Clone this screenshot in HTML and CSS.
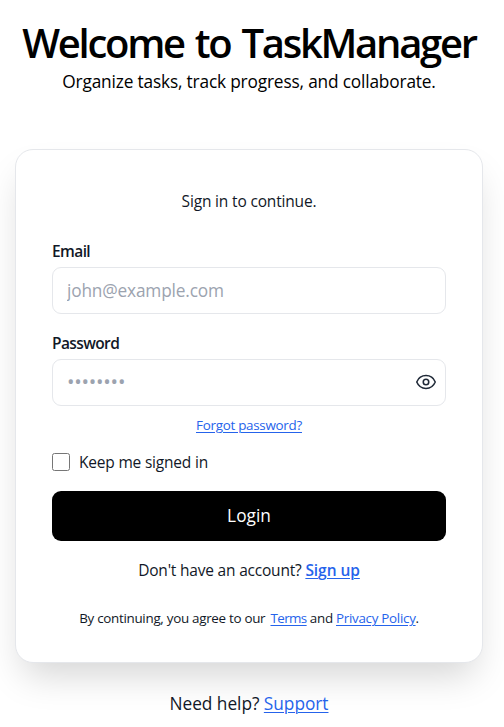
FILE: index.html
```html
<!DOCTYPE html>
<html lang="en">
<head>
<meta charset="utf-8">
<title>TaskManager</title>
<link rel="stylesheet" href="styles.css">
</head>
<body>
<main class="page">
  <header class="hero">
    <h1 class="title">Welcome to TaskManager</h1>
    <p class="subtitle">Organize tasks, track progress, and collaborate.</p>
  </header>
  <form class="card">
    <p class="intro">Sign in to continue.</p>
    <label class="label" for="email">Email</label>
    <input class="input" id="email" type="email" placeholder="john@example.com">
    <label class="label" for="password">Password</label>
    <div class="field">
      <input class="input input-password" id="password" type="password" placeholder="••••••••">
      <button class="reveal" type="button" aria-label="Show password">
        <svg class="eye" viewBox="0 0 24 24"><path d="M2.06 12.35a1 1 0 0 1 0-.7 10.75 10.75 0 0 1 19.88 0 1 1 0 0 1 0 .7 10.75 10.75 0 0 1-19.88 0"/><circle cx="12" cy="12" r="3"/></svg>
      </button>
    </div>
    <p class="forgot"><a href="#">Forgot password?</a></p>
    <label class="remember"><input class="checkbox" type="checkbox"><span>Keep me signed in</span></label>
    <button class="login" type="button">Login</button>
    <p class="signup">Don't have an account? <a class="strong" href="#">Sign up</a></p>
    <p class="terms">By continuing, you agree to our <a href="#">Terms</a> and <a href="#">Privacy Policy</a>.</p>
  </form>
  <footer class="help">Need help? <a href="#">Support</a></footer>
</main>
</body>
</html>
```
FILE: styles.css
```css
* { box-sizing: border-box; }
body { margin: 0; background: #fff; color: #111827; font-family: "Open Sans", "Noto Sans", sans-serif; font-size: 15.5px; letter-spacing: -.17px; overflow: hidden; }
h1, p { margin: 0; }
a { color: #2563eb; text-decoration: underline; text-decoration-thickness: 1px; text-underline-offset: 2px; }
.page { padding: 19px 21px 0 15px; text-align: center; }
.hero { color: #000; }
.title { font-size: 40px; font-weight: 600; line-height: 48px; letter-spacing: -2.3px; word-spacing: 3px; white-space: nowrap; }
.subtitle { margin-top: 1px; font-size: 17.3px; line-height: 28px; }
.card { display: flex; flex-direction: column; margin-top: 53px; height: 514px; padding: 39px 36px 0; border: 1px solid #e5e7eb; border-radius: 18px; background: #fff; box-shadow: 0 20px 36px -8px rgba(0, 0, 0, .17); }
.intro { line-height: 24px; }
.label { margin-top: 26px; line-height: 24px; text-align: left; font-weight: 600; letter-spacing: -.6px; }
.input { width: 100%; height: 47px; margin-top: 4px; padding: 0 14px; border: 1px solid #e5e7eb; border-radius: 9px; background: #fff; font: inherit; font-size: 17.3px; letter-spacing: -.18px; }
.input::placeholder { color: #9ca3af; opacity: 1; }
.input-password::placeholder { font-size: 20px; letter-spacing: -.25px; }
.label ~ .label { margin-top: 17px; }
.field { position: relative; }
.reveal { position: absolute; right: 9px; top: 16px; width: 22px; height: 22px; padding: 0; border: 0; background: none; }
.eye { display: block; width: 22px; height: 22px; fill: none; stroke: #1f2937; stroke-width: 1.7; stroke-linecap: round; stroke-linejoin: round; }
.forgot { margin-top: 9px; font-size: 13.4px; line-height: 21px; letter-spacing: -.27px; }
.remember { display: flex; align-items: center; gap: 9px; margin-top: 14px; line-height: 24px; letter-spacing: -.2px; }
.checkbox { width: 18px; height: 18px; margin: 0; }
.login { height: 50px; margin-top: 17px; padding: 0 0 2px; border: 0; border-radius: 9px; background: #000; color: #fff; font: inherit; font-size: 17.3px; letter-spacing: 0; }
.signup { margin-top: 17px; line-height: 24px; letter-spacing: -.2px; }
.strong { font-weight: 600; letter-spacing: -.05px; }
.terms { margin-top: 26px; font-size: 13.4px; line-height: 21px; letter-spacing: -.29px; }
.terms a:first-child { letter-spacing: -.6px; margin-left: 2px; }
.help { margin-top: 27px; font-size: 17.3px; line-height: 28px; letter-spacing: -.03px; }
```
